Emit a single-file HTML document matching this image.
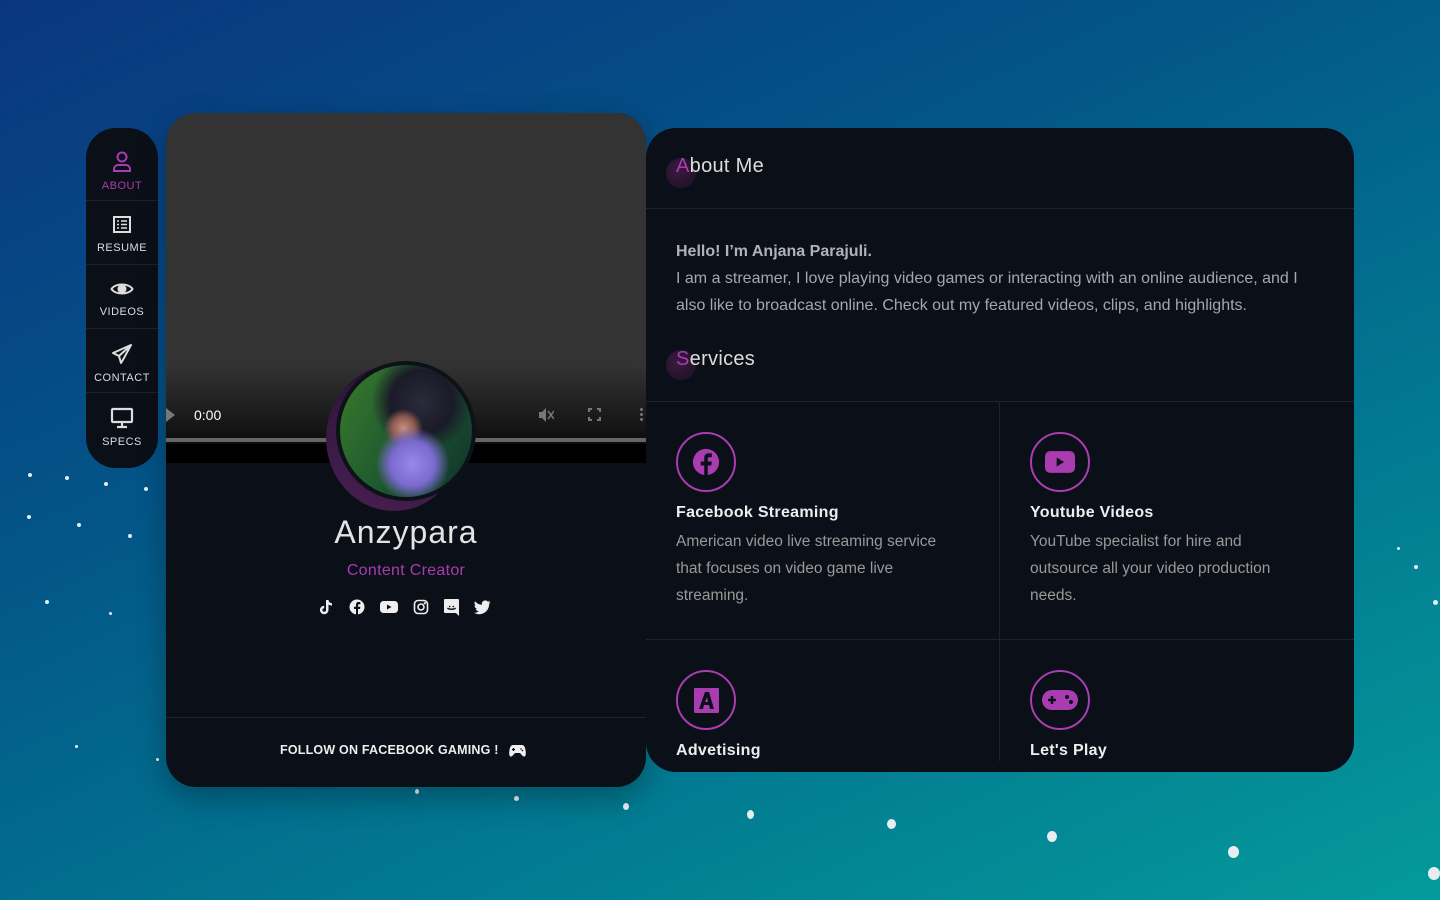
<!DOCTYPE html>
<html><head><meta charset="utf-8"><style>
*{box-sizing:border-box;margin:0;padding:0}
body{width:1440px;height:900px;overflow:hidden;position:relative;font-family:"Liberation Sans","DejaVu Sans",sans-serif;background:linear-gradient(155deg,#0a3680 0%,#035487 35%,#027590 65%,#049a9a 100%)}
.dot{position:absolute;background:#e8eef0;border-radius:50%}
.side{position:absolute;left:86px;top:128px;width:72px;height:340px;background:#0b0f17;border-radius:30px;overflow:hidden;padding-top:9px}
.it{height:64px;border-bottom:1px solid #1c222b;text-align:center;color:#ddd;font-size:11px;letter-spacing:.5px;padding-top:14px;position:relative}
.it svg{display:block;margin:0 auto 7px}
.it.act{color:#a83cb0}
.left{position:absolute;left:166px;top:113px;width:480px;height:674px;background:#0b0f17;border-radius:30px;overflow:hidden;box-shadow:0 10px 30px rgba(0,0,0,.3)}
.vid{position:absolute;left:0;top:0;width:480px;height:350px;background:linear-gradient(#333 0%,#333 72%,#151515 90%,#000 100%)}
.vid .bar{position:absolute;left:0;top:325px;width:480px;height:4px;background:#666}
.vid .blk{position:absolute;left:0;top:331px;width:480px;height:19px;background:#000}
.right{position:absolute;left:646px;top:128px;width:708px;height:644px;background:#0b0f17;border-radius:30px;overflow:hidden}
h2{position:absolute;font-size:20px;font-weight:normal;color:#ddd;letter-spacing:.3px}
h2 span{color:#a83cb0}
.blob{position:absolute;width:30px;height:30px;border-radius:50%;background:radial-gradient(circle at 40% 40%,#3a1a42,#1a1020)}
.hr{position:absolute;height:1px;background:#1e242d}
p.t{position:absolute;left:30px;top:110px;width:640px;color:#a5a7ab;font-size:16px;line-height:27px}
.svc{position:absolute;width:320px}
.ic{width:60px;height:60px;border:2px solid #a83cb0;border-radius:50%;display:flex;align-items:center;justify-content:center}
.svc h3{font-size:16px;color:#eee;margin-top:12px;letter-spacing:.3px}
.svc p{font-size:15.5px;color:#999;line-height:27px;margin-top:6px;width:285px}
</style></head><body>
<div class="dot" style="left:415px;top:789px;width:4px;height:5px"></div>
<div class="dot" style="left:514px;top:796px;width:5px;height:5px"></div>
<div class="dot" style="left:623px;top:803px;width:6px;height:7px"></div>
<div class="dot" style="left:747px;top:810px;width:7px;height:9px"></div>
<div class="dot" style="left:887px;top:819px;width:9px;height:10px"></div>
<div class="dot" style="left:1047px;top:831px;width:10px;height:11px"></div>
<div class="dot" style="left:1228px;top:846px;width:11px;height:12px"></div>
<div class="dot" style="left:1428px;top:867px;width:12px;height:13px"></div>
<div class="dot" style="left:27px;top:515px;width:4px;height:4px"></div>
<div class="dot" style="left:77px;top:523px;width:4px;height:4px"></div>
<div class="dot" style="left:128px;top:534px;width:4px;height:4px"></div>
<div class="dot" style="left:45px;top:600px;width:4px;height:4px"></div>
<div class="dot" style="left:109px;top:612px;width:3px;height:3px"></div>
<div class="dot" style="left:75px;top:745px;width:3px;height:3px"></div>
<div class="dot" style="left:156px;top:758px;width:3px;height:3px"></div>
<div class="dot" style="left:28px;top:473px;width:4px;height:4px"></div>
<div class="dot" style="left:65px;top:476px;width:4px;height:4px"></div>
<div class="dot" style="left:104px;top:482px;width:4px;height:4px"></div>
<div class="dot" style="left:144px;top:487px;width:4px;height:4px"></div>
<div class="dot" style="left:1397px;top:547px;width:3px;height:3px"></div>
<div class="dot" style="left:1414px;top:565px;width:4px;height:4px"></div>
<div class="dot" style="left:1433px;top:600px;width:5px;height:5px"></div>

<div class="side">
 <div class="it act"><svg width="20" height="22" viewBox="0 0 20 22" fill="none" stroke="#a83cb0" stroke-width="2"><circle cx="10" cy="6" r="4.5"/><path d="M2 20v-2a4 4 0 0 1 4-4h8a4 4 0 0 1 4 4v2z"/></svg>ABOUT</div>
 <div class="it"><svg width="20" height="20" viewBox="0 0 20 20" fill="none" stroke="#ddd" stroke-width="2"><rect x="2" y="2" width="16" height="15"/><path d="M5 6h2M9 6h6M5 9.5h2M9 9.5h6M5 13h2M9 13h6" stroke-width="1.6"/></svg>RESUME</div>
 <div class="it"><svg width="24" height="20" viewBox="0 0 24 20" fill="none" stroke="#ddd" stroke-width="2"><path d="M1.5 10C5 4 19 4 22.5 10 19 16 5 16 1.5 10z"/><circle cx="12" cy="10" r="3.5" fill="#ddd"/></svg>VIDEOS</div>
 <div class="it"><svg width="22" height="22" viewBox="0 0 22 22" fill="none" stroke="#ddd" stroke-width="2" stroke-linejoin="round"><path d="M20 2L2 10l6 3 2 7 3-5zM8 13l12-11"/></svg>CONTACT</div>
 <div class="it" style="border:0"><svg width="24" height="22" viewBox="0 0 24 22" fill="none" stroke="#ddd" stroke-width="2.2"><rect x="2" y="2" width="20" height="13" rx="1"/><path d="M12 15v4M7 20h10"/></svg>SPECS</div>
</div>

<div class="left">
 <div class="vid">
  <svg style="position:absolute;left:0;top:295px" width="10" height="14"><path d="M0 0L9 7 0 14z" fill="#777"/></svg>
  <div style="position:absolute;left:28px;top:294px;color:#fff;font-size:14px">0:00</div>
  <svg style="position:absolute;left:372px;top:294px" width="16" height="16" viewBox="0 0 16 16" fill="#777"><path d="M1 5h3l4-4v14l-4-4H1z"/><path d="M10 4l6 8M16 4l-6 8" stroke="#777" stroke-width="1.5"/></svg>
  <svg style="position:absolute;left:422px;top:295px" width="13" height="13" fill="none" stroke="#777" stroke-width="2"><path d="M1 4V1h3M9 1h3v3M12 9v3H9M4 12H1V9"/></svg>
  <div style="position:absolute;left:474px;top:294px;width:3px;height:15px;background:radial-gradient(circle,#777 1.3px,transparent 1.6px) 0 0/3px 5px"></div>
  <div class="bar"></div><div class="blk"></div>
 </div>
 <div style="position:absolute;left:160px;top:252px;width:136px;height:146px;border-radius:50%;background:linear-gradient(200deg,#1e1230,#4a1f52);"></div>
 <div style="position:absolute;left:170px;top:248px;width:140px;height:140px;border-radius:50%;background:#0d1118;padding:4px">
  <div style="width:132px;height:132px;border-radius:50%;background:radial-gradient(circle at 55% 75%,#9a88e8 0%,#7a6ad0 18%,transparent 30%),radial-gradient(circle at 48% 48%,#c79080 0%,#8a5a50 12%,transparent 20%),radial-gradient(circle at 62% 28%,#2a2a3a 0%,#1a1a28 25%,transparent 40%),linear-gradient(120deg,#3a7a2a,#1f5a30 50%,#10302a)"></div>
 </div>
 <div style="position:absolute;left:0;top:401px;width:480px;text-align:center;font-size:32px;color:#e4e4e4;letter-spacing:1px">Anzypara</div>
 <div style="position:absolute;left:0;top:449px;width:480px;text-align:center;font-size:16px;color:#a83cb0;letter-spacing:.3px">Content Creator</div>
 <div style="position:absolute;left:152px;top:486px;display:flex;gap:15px">
  <svg width="16" height="16" viewBox="0 0 16 16" fill="#eee"><path d="M8 1h2.5c.2 2 1.5 3 3.5 3.2v2.4c-1.3 0-2.5-.4-3.5-1.1V11a4.3 4.3 0 1 1-4.3-4.3v2.5A1.8 1.8 0 1 0 8 11z"/></svg>
  <svg width="16" height="16" viewBox="0 0 16 16"><circle cx="8" cy="8" r="7.5" fill="#eee"/><path d="M9 16V10h2l.3-2.3H9V6.3c0-.7.3-1.1 1.1-1.1h1.3V3.1c-.5 0-1.2-.1-1.9-.1C8 3 7 4 7 5.8v1.9H5V10h2v6z" fill="#0b0f17"/></svg>
  <svg width="18" height="16" viewBox="0 0 18 16"><rect x="0" y="2" width="18" height="12" rx="3.5" fill="#eee"/><path d="M7 5.5v5l4.5-2.5z" fill="#0b0f17"/></svg>
  <svg width="16" height="16" viewBox="0 0 16 16" fill="none" stroke="#eee" stroke-width="1.6"><rect x="1.5" y="1.5" width="13" height="13" rx="3.5"/><circle cx="8" cy="8" r="3"/><circle cx="11.8" cy="4.2" r=".4" fill="#eee"/></svg>
  <svg width="15" height="17" viewBox="0 0 15 17"><path d="M1 0h13a1 1 0 0 1 1 1v16l-3-3H1a1 1 0 0 1-1-1V1a1 1 0 0 1 1-1z" fill="#eee"/><path d="M4 9.5c1.5 1 5.5 1 7 0M5.7 7.5h.1M9.3 7.5h.1" stroke="#0b0f17" stroke-width="1.6" stroke-linecap="round"/></svg>
  <svg width="17" height="16" viewBox="0 0 17 16"><path d="M16.5 3.2c-.6.3-1.3.4-2 .5.7-.4 1.2-1.1 1.5-1.9-.7.4-1.4.7-2.2.8A3.4 3.4 0 0 0 8 5.8 9.8 9.8 0 0 1 1 2.2a3.4 3.4 0 0 0 1 4.6c-.5 0-1-.2-1.5-.4 0 1.7 1.2 3.1 2.7 3.4-.5.1-1 .2-1.5.1.4 1.4 1.7 2.4 3.2 2.4A6.9 6.9 0 0 1 0 13.7 9.7 9.7 0 0 0 5.3 15.2c6.3 0 9.8-5.3 9.8-9.8v-.4c.6-.5 1.1-1.1 1.4-1.8z" fill="#eee"/></svg>
 </div>
 <div class="hr" style="left:0;top:604px;width:480px"></div>
 <div style="position:absolute;left:114px;top:630px;font-size:12.5px;color:#eee;font-weight:bold;letter-spacing:.2px;display:flex;align-items:center;gap:10px">FOLLOW ON FACEBOOK GAMING ! <svg width="17" height="13" viewBox="0 0 17 13"><path d="M4 1h9c2 0 3 2 3.5 5s.5 6-1 6.5S12 10 11 9H6c-1 1-3 4-4.5 3.5S0 9 .5 6 2 1 4 1z" fill="#eee"/><path d="M3 5.5h3M4.5 4v3" stroke="#0b0f17" stroke-width="1.2"/><circle cx="12" cy="5" r=".8" fill="#0b0f17"/><circle cx="13.5" cy="6.5" r=".8" fill="#0b0f17"/></svg></div>
</div>

<div class="right">
 <div class="blob" style="left:20px;top:30px"></div>
 <h2 style="left:30px;top:27px"><span>A</span>bout Me</h2>
 <div class="hr" style="left:0;top:80px;width:708px"></div>
 <p class="t"><b style="font-weight:bold;color:#b0b2b6">Hello! I’m Anjana Parajuli.</b><br>I am a streamer, I love playing video games or interacting with an online audience, and I also like to broadcast online. Check out my featured videos, clips, and highlights.</p>
 <div class="blob" style="left:20px;top:222px"></div>
 <h2 style="left:30px;top:220px"><span>S</span>ervices</h2>
 <div class="hr" style="left:0;top:273px;width:708px"></div>
 <div class="hr" style="left:353px;top:273px;width:1px;height:360px"></div>
 <div class="hr" style="left:0;top:511px;width:708px"></div>
 <div class="svc" style="left:30px;top:304px"><div class="ic"><svg width="28" height="28" viewBox="0 0 16 16"><circle cx="8" cy="8" r="7.5" fill="#a83cb0"/><path d="M9 16V10h2l.3-2.3H9V6.3c0-.7.3-1.1 1.1-1.1h1.3V3.1c-.5 0-1.2-.1-1.9-.1C8 3 7 4 7 5.8v1.9H5V10h2v6z" fill="#0b0f17"/></svg></div><h3>Facebook Streaming</h3><p>American video live streaming service that focuses on video game live streaming.</p></div>
 <div class="svc" style="left:384px;top:304px"><div class="ic"><svg width="30" height="22" viewBox="0 0 18 13"><rect x="0" y="0" width="18" height="13" rx="3" fill="#a83cb0"/><path d="M7 3.8v5.4l4.5-2.7z" fill="#0b0f17"/></svg></div><h3>Youtube Videos</h3><p style="width:262px">YouTube specialist for hire and outsource all your video production needs.</p></div>
 <div class="svc" style="left:30px;top:542px"><div class="ic"><svg width="25" height="25" viewBox="0 0 25 25"><rect width="25" height="25" rx="1" fill="#a83cb0"/><path d="M5 21L11 4h4l5 17h-4l-1-4h-5l-1 4zM11 14h3l-1-5z" fill="#0b0f17"/></svg></div><h3>Advetising</h3></div>
 <div class="svc" style="left:384px;top:542px"><div class="ic"><svg width="36" height="20" viewBox="0 0 36 20"><rect x="0" y="0" width="36" height="20" rx="10" fill="#a83cb0"/><path d="M6 10h8M10 6v8" stroke="#0b0f17" stroke-width="2.5"/><circle cx="25" cy="7" r="2" fill="#0b0f17"/><circle cx="29" cy="12" r="2" fill="#0b0f17"/></svg></div><h3>Let's Play</h3></div>
</div>
</body></html>
